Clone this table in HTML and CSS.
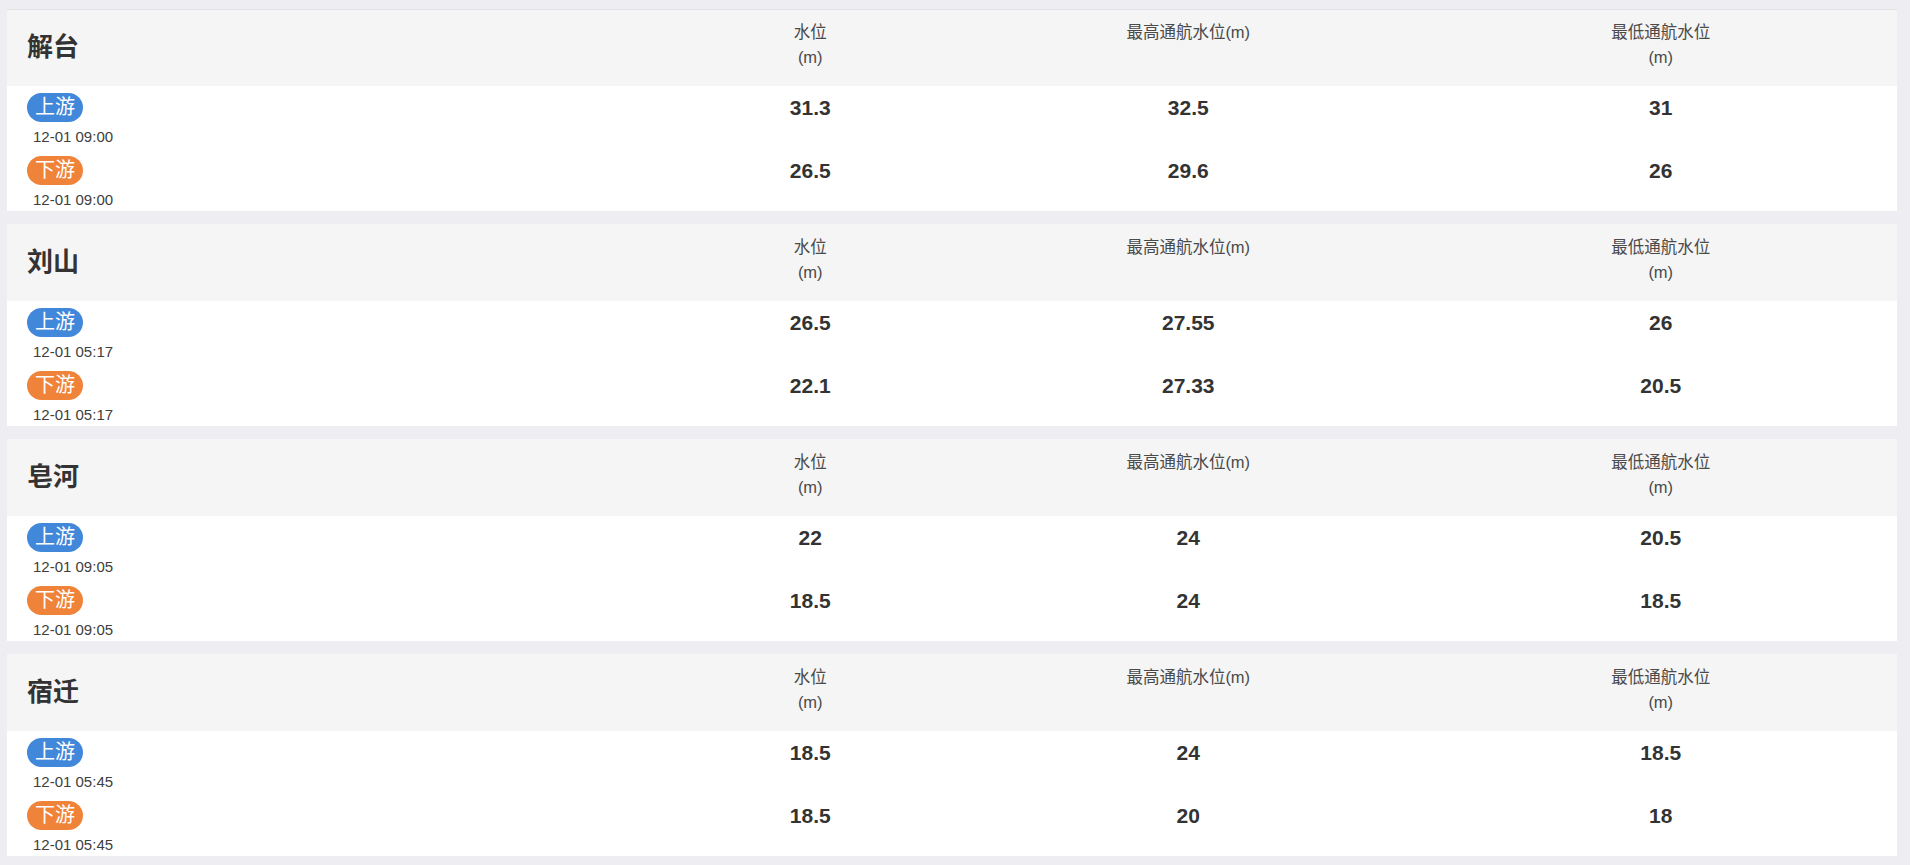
FILE: index.html
```html
<!DOCTYPE html>
<html lang="zh">
<head>
<meta charset="utf-8">
<title>水位</title>
<link rel="stylesheet" href="styles.css">
</head>
<body>
<div class="page">
  <section class="card">
    <div class="head">
      <div class="name">解台</div>
      <div class="col">水位<br>(m)</div>
      <div class="col">最高通航水位(m)</div>
      <div class="col">最低通航水位<br>(m)</div>
    </div>
    <div class="row">
      <div class="loc"><span class="tag up">上游</span><div class="time">12-01 09:00</div></div>
      <div class="val">31.3</div><div class="val">32.5</div><div class="val">31</div>
    </div>
    <div class="row">
      <div class="loc"><span class="tag down">下游</span><div class="time">12-01 09:00</div></div>
      <div class="val">26.5</div><div class="val">29.6</div><div class="val">26</div>
    </div>
  </section>
  <section class="card">
    <div class="head">
      <div class="name">刘山</div>
      <div class="col">水位<br>(m)</div>
      <div class="col">最高通航水位(m)</div>
      <div class="col">最低通航水位<br>(m)</div>
    </div>
    <div class="row">
      <div class="loc"><span class="tag up">上游</span><div class="time">12-01 05:17</div></div>
      <div class="val">26.5</div><div class="val">27.55</div><div class="val">26</div>
    </div>
    <div class="row">
      <div class="loc"><span class="tag down">下游</span><div class="time">12-01 05:17</div></div>
      <div class="val">22.1</div><div class="val">27.33</div><div class="val">20.5</div>
    </div>
  </section>
  <section class="card">
    <div class="head">
      <div class="name">皂河</div>
      <div class="col">水位<br>(m)</div>
      <div class="col">最高通航水位(m)</div>
      <div class="col">最低通航水位<br>(m)</div>
    </div>
    <div class="row">
      <div class="loc"><span class="tag up">上游</span><div class="time">12-01 09:05</div></div>
      <div class="val">22</div><div class="val">24</div><div class="val">20.5</div>
    </div>
    <div class="row">
      <div class="loc"><span class="tag down">下游</span><div class="time">12-01 09:05</div></div>
      <div class="val">18.5</div><div class="val">24</div><div class="val">18.5</div>
    </div>
  </section>
  <section class="card">
    <div class="head">
      <div class="name">宿迁</div>
      <div class="col">水位<br>(m)</div>
      <div class="col">最高通航水位(m)</div>
      <div class="col">最低通航水位<br>(m)</div>
    </div>
    <div class="row">
      <div class="loc"><span class="tag up">上游</span><div class="time">12-01 05:45</div></div>
      <div class="val">18.5</div><div class="val">24</div><div class="val">18.5</div>
    </div>
    <div class="row">
      <div class="loc"><span class="tag down">下游</span><div class="time">12-01 05:45</div></div>
      <div class="val">18.5</div><div class="val">20</div><div class="val">18</div>
    </div>
  </section>
</div>
</body>
</html>
```
FILE: styles.css
```css
html, body {
  margin: 0;
  padding: 0;
  background: #ffffff;
  font-family: "Liberation Sans", "Noto Sans CJK SC", sans-serif;
  color: #333333;
}

.page {
  box-sizing: border-box;
  width: 1910px;
  height: 865px;
  overflow: hidden;
  background: #eeeef2;
  padding: 9px 13px 0 7px;
  display: flex;
  flex-direction: column;
  gap: 13px;
}

.card {
  background: #ffffff;
  display: flex;
  flex-direction: column;
}

.card:first-child {
  border-top: 1px solid #e2e2e6;
}

.card + .card {
  padding-top: 1px;
  background: linear-gradient(#f5f5f5, #f5f5f5) top / 100% 1px no-repeat, #ffffff;
}

.head,
.row {
  display: grid;
  grid-template-columns: 35% 15% 25% 25%;
}

.head {
  box-sizing: border-box;
  height: 76px;
  background: #f5f5f5;
  padding-top: 10px;
  align-items: start;
}

.name {
  align-self: center;
  padding-left: 20px;
  margin-top: -12px;
  font-size: 26px;
  font-weight: bold;
  color: #333333;
  line-height: 30px;
}

.col {
  text-align: center;
  font-size: 16.5px;
  line-height: 25px;
  color: #4a4a4a;
}

.row {
  padding-top: 7px;
  padding-bottom: 1px;
  align-items: start;
}

.row + .row {
  padding-bottom: 0;
}

.loc {
  padding-left: 20px;
  display: flex;
  flex-direction: column;
  align-items: flex-start;
}

.tag {
  display: inline-block;
  height: 29px;
  line-height: 29px;
  padding: 0 8px;
  border-radius: 15px;
  font-size: 20px;
  color: #ffffff;
}

.tag.up {
  background: #4187da;
}

.tag.down {
  background: #ef833a;
}

.time {
  margin-top: 4px;
  margin-left: 6px;
  font-size: 15px;
  line-height: 22px;
  color: #404040;
}

.val {
  text-align: center;
  font-size: 21px;
  font-weight: bold;
  line-height: 30px;
  color: #333333;
}
```
